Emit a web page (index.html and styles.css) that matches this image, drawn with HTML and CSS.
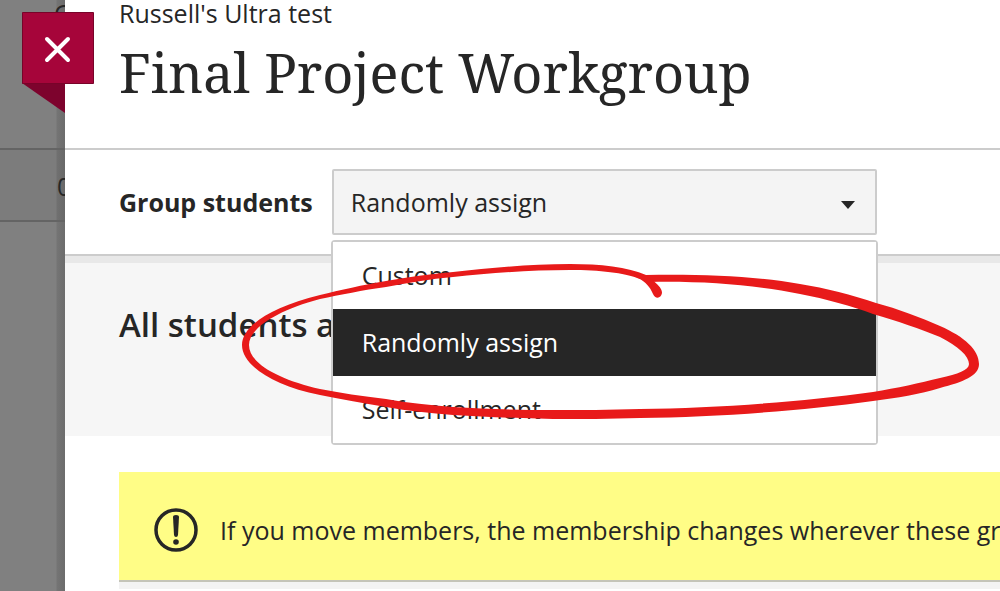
FILE: index.html
```html
<!DOCTYPE html>
<html lang="en">
<head>
    <meta charset="UTF-8">
    <meta name="viewport" content="width=device-width, initial-scale=1.0">
    <title>Final Project Workgroup</title>
    <link rel="stylesheet" href="styles.css">
</head>
<body>
    <div class="page">
        <aside class="backdrop">
            <div class="backdrop-head">C</div>
            <div class="backdrop-row">0</div>
        </aside>

        <main class="panel">
            <header class="panel-header">
                <p class="course">Russell's Ultra test</p>
                <h1>Final Project Workgroup</h1>
            </header>

            <div class="group-row">
                <label for="grouping">Group students</label>
                <div class="dropdown">
                    <select id="grouping">
                        <option>Randomly assign</option>
                    </select>
                    <svg class="caret" viewBox="0 0 14 8" aria-hidden="true"><path d="M0 0h14L7 8z"/></svg>
                    <ul class="menu">
                        <li><button type="button">Custom</button></li>
                        <li><button type="button" class="selected">Randomly assign</button></li>
                        <li><button type="button">Self-enrollment</button></li>
                    </ul>
                </div>
            </div>

            <section class="students">
                <h2>All students a</h2>
            </section>

            <div class="notice">
                <svg class="notice-icon" viewBox="0 0 44 44" aria-hidden="true">
                    <circle cx="22" cy="22" r="20" fill="none" stroke="#262626" stroke-width="3.5"/>
                    <path d="M19 9q0-2 3-2t3 2l-1 18q-.3 2-2 2t-2-2z"/>
                    <circle cx="22" cy="34" r="2.8"/>
                </svg>
                <p>If you move members, the membership changes wherever these gr</p>
            </div>
        </main>

        <button type="button" class="close" aria-label="Close">
            <svg viewBox="0 0 72 102" aria-hidden="true">
                <path d="M0 71h43v30z" fill="#7d032d"/>
                <path d="M.5.5h71v71H.5z" fill="#a6053a" stroke="#780329"/>
                <path d="M25 27l21 21M46 27L25 48" stroke="#fff" stroke-width="4" stroke-linecap="round"/>
            </svg>
        </button>

        <svg class="marker" viewBox="240 262 742 160" aria-hidden="true">
            <path fill-rule="evenodd" d="M646 275C700 274 755 276 800 284C826 288 852 295 876 303C898 309 920 317 940 326C965 337 979 350 979 364C979 376 963 382 940 388C920 394 897 398 873 401C800 411 715 417 640 418C610 419 580 419 553 419C518 418 485 417 453 415C430 413 408 411 386 407C362 403 340 399 320 395C270 385 242 364 242 345C242 327 268 308 320 295C340 290 363 285 386 281C408 277 430 274 453 272C490 268 530 264 570 264C600 264 628 267 646 275z
            M650 282C705 281 755 285 800 294C826 299 852 306 873 314C898 321 920 329 940 337C958 346 969 356 969 364C969 370 958 374 940 378C920 383 897 388 873 392C800 402 715 408 640 409C610 410 580 410 553 410C518 410 485 409 453 407C430 405 408 403 386 399C362 396 340 393 320 389C280 380 249 364 249 345C249 329 275 311 320 299C340 295 363 290 386 287C408 283 430 279 453 277C490 273 530 270 570 270C600 270 625 273 637 278z"/>
            <path d="M634 272C654 277 663 289 662 293C661 299 655 299 653 294C650 287 646 282 638 278z"/>
        </svg>
    </div>
</body>
</html>
```
FILE: styles.css
```css
* {
    box-sizing: border-box;
}
body {
    margin: 0;
    overflow: hidden;
    font-family: "Open Sans", sans-serif;
    font-size: 25px;
    line-height: 34px;
    color: #262626;
}
h1, h2, p, ul {
    margin: 0;
    padding: 0;
}
.page {
    position: relative;
    display: grid;
    grid-template-columns: 65px minmax(0, 1fr);
    min-height: 100vh;
}

/* dimmed page behind the panel */
.backdrop {
    overflow: hidden;
    background: linear-gradient(to right, transparent 56px, #747474 57px, #6c6c6c) #808080;
}
.backdrop-head {
    height: 150px;
    padding-left: 54px;
    border-bottom: 2px solid #646464;
    line-height: 26px;
}
.backdrop-row {
    height: 72px;
    padding: 19px 0 0 57px;
    border-bottom: 2px solid #646464;
    background: rgba(0, 0, 0, 0.03);
}

.panel {
    background: #fff;
}
.panel-header {
    height: 150px;
    padding-left: 54px;
    border-bottom: 2px solid #ccc;
}
.course {
    line-height: 26px;
}
h1 {
    font-family: "Noto Serif", "DejaVu Serif Condensed", "DejaVu Serif", serif;
    font-size: 54px;
    font-weight: 400;
    line-height: 92px;
    white-space: nowrap;
}
.group-row {
    display: flex;
    align-items: center;
    gap: 19px;
    height: 106px;
    padding: 0 54px;
    border-bottom: 2px solid #ccc;
}
.group-row label {
    font-weight: 700;
    white-space: nowrap;
}
.dropdown {
    position: relative;
    flex: 1;
    max-width: 545px;
}
select {
    display: block;
    width: 100%;
    height: 66px;
    padding: 0 17px;
    border: 2px solid #ccc;
    border-radius: 2px;
    background: #f4f4f4;
    color: #262626;
    font: inherit;
    appearance: none;
}
.caret {
    position: absolute;
    top: 32px;
    right: 22px;
    width: 14px;
    height: 8px;
    fill: #262626;
}
.menu {
    position: absolute;
    z-index: 1;
    top: 71px;
    left: -1px;
    right: -1px;
    border: 2px solid #ccc;
    border-radius: 4px;
    background: #fff;
    list-style: none;
}
.menu button {
    display: block;
    width: 100%;
    height: 67px;
    padding: 0 29px 2px;
    border: 0;
    background: #fff;
    color: #262626;
    font: inherit;
    text-align: left;
}
.menu .selected {
    background: #262626;
    color: #fff;
}

.students {
    height: 180px;
    padding: 44px 54px;
    border-top: 7px solid #e8e8e8;
    background: #f6f6f6;
}
h2 {
    font-size: 33px;
    font-weight: 600;
    line-height: 36px;
}

.notice {
    display: flex;
    align-items: center;
    gap: 22px;
    height: 110px;
    margin: 36px 0 0 54px;
    padding: 8px 0 0 35px;
    overflow: hidden;
    border-bottom: 2px solid #c4c4b8;
    background: #fffd86;
    box-shadow: 0 7px #f3f3f3;
    white-space: nowrap;
}
.notice-icon {
    flex: none;
    width: 44px;
    height: 44px;
    fill: #262626;
}

.close {
    position: absolute;
    top: 12px;
    left: 22px;
    padding: 0;
    border: 0;
    background: none;
}
.close svg {
    display: block;
    width: 72px;
    height: 102px;
}

/* hand-drawn ring round the chosen option */
.marker {
    position: absolute;
    z-index: 2;
    top: 262px;
    left: 240px;
    width: 742px;
    height: 160px;
    fill: #e81a1a;
    pointer-events: none;
}
```
